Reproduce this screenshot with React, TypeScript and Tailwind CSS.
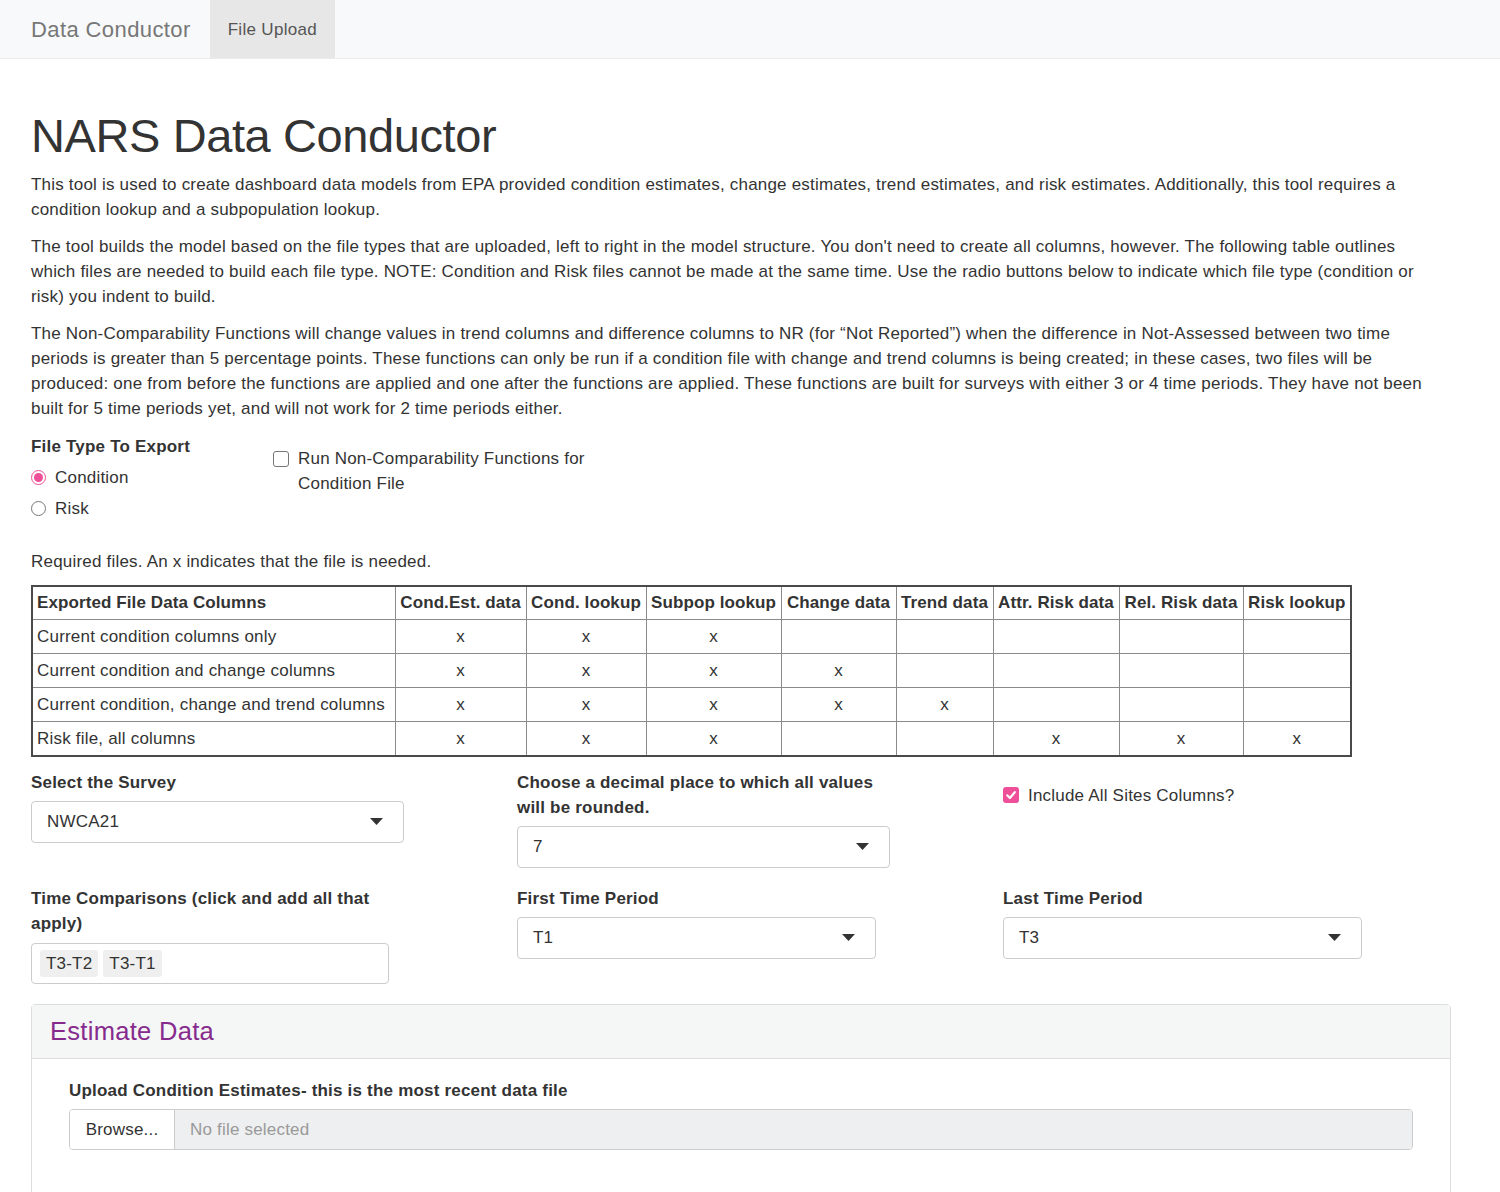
import React from 'react';

const cols = [
  { label: 'Exported File Data Columns', w: 'w-[363px]' },
  { label: 'Cond.Est. data', w: 'w-[131px]' },
  { label: 'Cond. lookup', w: 'w-[120px]' },
  { label: 'Subpop lookup', w: 'w-[135px]' },
  { label: 'Change data', w: 'w-[115px]' },
  { label: 'Trend data', w: 'w-[97px]' },
  { label: 'Attr. Risk data', w: 'w-[126px]' },
  { label: 'Rel. Risk data', w: 'w-[124px]' },
  { label: 'Risk lookup', w: 'w-[108px]' },
];

const rows: [string, boolean[]][] = [
  ['Current condition columns only', [true, true, true, false, false, false, false, false]],
  ['Current condition and change columns', [true, true, true, true, false, false, false, false]],
  ['Current condition, change and trend columns', [true, true, true, true, true, false, false, false]],
  ['Risk file, all columns', [true, true, true, false, false, true, true, true]],
];

function Caret() {
  return (
    <svg width="13" height="7" viewBox="0 0 13 7" className="shrink-0">
      <path d="M0 0 L13 0 L6.5 7 Z" fill="#333" />
    </svg>
  );
}

function SelectBox({ value, width }: { value: string; width: string }) {
  return (
    <div
      className={`${width} h-[42px] flex items-center justify-between pl-[15px] pr-[20px] border border-[#ccc] rounded-[4px] bg-white text-[#333]`}
    >
      <span>{value}</span>
      <Caret />
    </div>
  );
}

export default function App() {
  return (
    <div className="min-h-[1192px] bg-white text-[#333] text-[17px] leading-[25px] tracking-[0.2px] font-['Liberation_Sans',Arial,sans-serif]">
      {/* navbar */}
      <nav className="h-[59px] bg-[#f8f9fa] border-b border-[#ebebeb] flex items-stretch pl-[31px]">
        <div className="flex items-center text-[22px] tracking-[0.4px] text-[#777] mr-[19px]">Data Conductor</div>
        <div className="flex items-center px-[18px] bg-[#e7e7e7] text-[17px] tracking-[0.3px] text-[#555]">File Upload</div>
      </nav>

      <main className="px-[31px] w-[1463px]">
        <h1 className="mt-[48px] mb-[7px] text-[47px] leading-[57.6px] tracking-[-0.4px] font-normal text-[#333]">NARS Data Conductor</h1>

        <p className="mb-[12px]">
          This tool is used to create dashboard data models from EPA provided condition estimates, change estimates, trend
          estimates, and risk estimates. Additionally, this tool requires a condition lookup and a subpopulation lookup.
        </p>
        <p className="mb-[12px]">
          The tool builds the model based on the file types that are uploaded, left to right in the model structure. You
          don't need to create all columns, however. The following table outlines which files are needed to build each file
          type. NOTE: Condition and Risk files cannot be made at the same time. Use the radio buttons below to indicate which
          file type (condition or risk) you indent to build.
        </p>
        <p className="mb-[13px]">
          The Non-Comparability Functions will change values in trend columns and difference columns to NR (for “Not
          Reported”) when the difference in Not-Assessed between two time periods is greater than 5 percentage points. These
          functions can only be run if a condition file with change and trend columns is being created; in these cases, two
          files will be produced: one from before the functions are applied and one after the functions are applied. These
          functions are built for surveys with either 3 or 4 time periods. They have not been built for 5 time periods yet,
          and will not work for 2 time periods either.
        </p>

        {/* file type + checkbox */}
        <div className="flex">
          <div className="w-[242px]">
            <div className="font-bold mb-[6px]">File Type To Export</div>
            <div className="flex items-center h-[25px] mb-[6px]">
              <span className="w-[15px] h-[15px] rounded-full border-[1.5px] border-[#ee4f98] flex items-center justify-center mr-[9px]">
                <span className="w-[9px] h-[9px] rounded-full bg-[#ee4f98]" />
              </span>
              Condition
            </div>
            <div className="flex items-center h-[25px]">
              <span className="w-[15px] h-[15px] rounded-full border border-[#767676] mr-[9px]" />
              Risk
            </div>
          </div>
          <div className="mt-[12px] flex items-start w-[330px]">
            <span className="mt-[5px] w-[16px] h-[16px] shrink-0 rounded-[3px] border border-[#767676] bg-white mr-[9px]" />
            <span>Run Non-Comparability Functions for Condition File</span>
          </div>
        </div>

        <div className="mt-[28px] mb-[11px]">Required files. An x indicates that the file is needed.</div>

        <table className="w-[1319px] border-collapse border-2 border-[#4a4a4a] table-fixed">
          <thead>
            <tr className="h-[34px]">
              {cols.map((c, i) => (
                <th
                  key={c.label}
                  className={`${c.w} border border-[#8a8a8a] font-bold px-[3px] py-0 ${i === 0 ? 'text-left pl-[4px]' : 'text-center'} whitespace-nowrap tracking-[0.1px]`}
                >
                  {c.label}
                </th>
              ))}
            </tr>
          </thead>
          <tbody>
            {rows.map(([name, marks]) => (
              <tr key={name} className="h-[34px]">
                <td className="border border-[#8a8a8a] px-[4px] whitespace-nowrap">{name}</td>
                {marks.map((m, j) => (
                  <td key={j} className="border border-[#8a8a8a] text-center px-[4px]">
                    {m ? 'x' : ''}
                  </td>
                ))}
              </tr>
            ))}
          </tbody>
        </table>

        {/* form grid */}
        <div className="mt-[13px] grid grid-cols-[486px_486px_1fr] gap-y-[18px] items-start">
          <div>
            <div className="font-bold mb-[6px]">Select the Survey</div>
            <SelectBox value="NWCA21" width="w-[373px]" />
          </div>
          <div>
            <div className="font-bold mb-[6px] w-[372px]">Choose a decimal place to which all values will be rounded.</div>
            <SelectBox value="7" width="w-[373px]" />
          </div>
          <div className="mt-[13px] flex items-center">
            <span className="w-[16px] h-[16px] rounded-[3px] bg-[#ee4f98] flex items-center justify-center mr-[9px]">
              <svg width="12" height="12" viewBox="0 0 12 12">
                <path d="M2.2 6.3 L4.9 9 L9.8 3.2" fill="none" stroke="#fff" strokeWidth="2.2" strokeLinecap="round" strokeLinejoin="round" />
              </svg>
            </span>
            Include All Sites Columns?
          </div>

          <div>
            <div className="font-bold mb-[7px] w-[360px]">Time Comparisons (click and add all that apply)</div>
            <div className="w-[358px] h-[41px] border border-[#ccc] rounded-[4px] bg-white flex items-center pl-[8px] gap-[5px]">
              <span className="bg-[#efefef] rounded-[3px] px-[6px] h-[27px] flex items-center">T3-T2</span>
              <span className="bg-[#efefef] rounded-[3px] px-[6px] h-[27px] flex items-center">T3-T1</span>
            </div>
          </div>
          <div>
            <div className="font-bold mb-[6px]">First Time Period</div>
            <SelectBox value="T1" width="w-[359px]" />
          </div>
          <div>
            <div className="font-bold mb-[6px]">Last Time Period</div>
            <SelectBox value="T3" width="w-[359px]" />
          </div>
        </div>

        {/* panel */}
        <section className="mt-[20px] border border-[#ddd] rounded-t-[4px] w-[1420px] h-[200px]">
          <div className="h-[54px] bg-[#f5f6f6] border-b border-[#ddd] flex items-center px-[18px]">
            <h3 className="text-[25.5px] leading-[30px] tracking-[0.3px] text-[#862b8d] font-normal">Estimate Data</h3>
          </div>
          <div className="px-[37px] pt-[19px]">
            <div className="font-bold mb-[6px]">Upload Condition Estimates- this is the most recent data file</div>
            <div className="flex h-[41px] border border-[#ccc] rounded-[4px] overflow-hidden">
              <div className="w-[105px] flex items-center justify-center bg-white border-r border-[#ccc]">Browse...</div>
              <div className="flex-1 flex items-center pl-[15px] bg-[#eeeff0] text-[#999]">No file selected</div>
            </div>
          </div>
        </section>
      </main>
    </div>
  );
}
